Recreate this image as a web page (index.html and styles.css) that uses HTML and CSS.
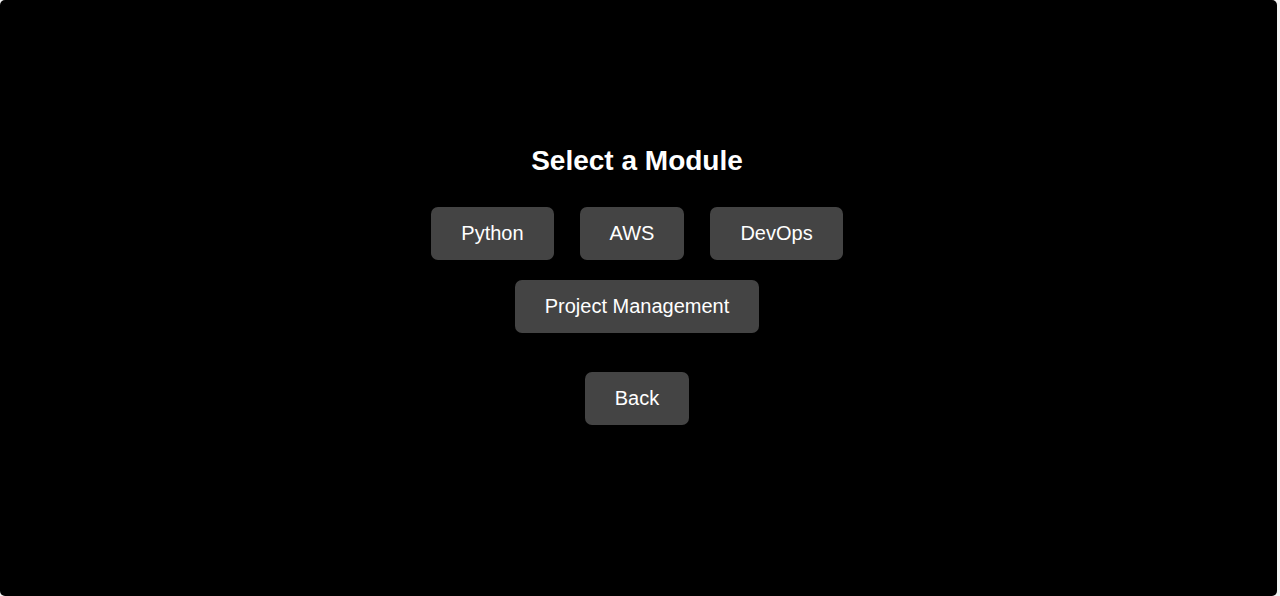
FILE: index.html
```html
<!DOCTYPE html>
<html lang="en">
<head>
<meta charset="utf-8">
<title>Select a Module</title>
<link rel="stylesheet" href="styles.css">
</head>
<body>
<main class="screen">
  <h1 class="title">Select a Module</h1>
  <div class="modules">
    <button class="btn">Python</button>
    <button class="btn">AWS</button>
    <button class="btn">DevOps</button>
    <button class="btn">Project Management</button>
  </div>
  <button class="btn back">Back</button>
</main>
</body>
</html>
```
FILE: styles.css
```css
html, body {
  margin: 0;
  padding: 0;
  background: #f2f2f2;
}
.screen {
  box-sizing: border-box;
  width: 1277px;
  height: 596px;
  background: #000;
  border-radius: 5px;
  display: flex;
  flex-direction: column;
  align-items: center;
  padding: 145px 3px 0 0;
  font-family: "Liberation Sans", Arial, sans-serif;
  color: #fff;
}
.title {
  margin: 0 0 30px;
  font-size: 28px;
  font-weight: bold;
  line-height: 32px;
}
.modules {
  display: flex;
  flex-wrap: wrap;
  justify-content: center;
  column-gap: 26px;
  row-gap: 20px;
  width: 420px;
}
.btn {
  font-family: "Liberation Sans", Arial, sans-serif;
  font-size: 20px;
  line-height: 23px;
  color: #fff;
  background: #444;
  border: none;
  border-radius: 7px;
  padding: 15px 30px;
  margin: 0;
}
.back {
  margin-top: 39px;
}
```
